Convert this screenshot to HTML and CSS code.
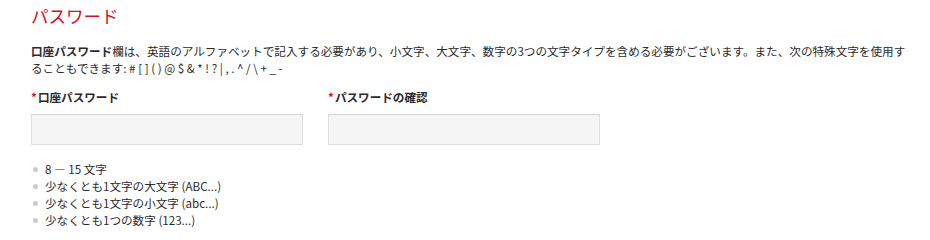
FILE: index.html
```html
<!DOCTYPE html>
<html lang="ja">
<head>
  <meta charset="UTF-8" />
  <meta name="viewport" content="width=device-width, initial-scale=1.0"/>
  <title>パスワード</title>
  <link rel="stylesheet" href="styles.css">
</head>
<body>

<div class="section">
  <h2 class="title">パスワード</h2>

  <p class="note"><strong>口座パスワード</strong>欄は、英語のアルファベットで記入する必要があり、小文字、大文字、数字の3つの文字タイプを含める必要がございます。また、次の特殊文字を使用す<br>ることもできます: # [ ] ( ) @ $ &amp; * ! ? | , . ^ / \ + _ -</p>

  <div class="fields">
    <div class="field">
      <label class="label" for="pw"><span class="req">*</span>口座パスワード</label>
      <input type="password" id="pw" class="input">
    </div>
    <div class="field">
      <label class="label" for="pw2"><span class="req">*</span>パスワードの確認</label>
      <input type="password" id="pw2" class="input">
    </div>
  </div>

  <ul class="rules">
    <li>8 — 15 文字</li>
    <li>少なくとも1文字の大文字 (ABC...)</li>
    <li>少なくとも1文字の小文字 (abc...)</li>
    <li>少なくとも1つの数字 (123...)</li>
  </ul>
</div>

</body>
</html>
```

FILE: styles.css
```css
body {
  font-family: "Noto Sans CJK JP", "Noto Sans", sans-serif;
  margin: 0;
  padding: 0;
  background: white;
  color: #2b2b2b;
}

.section {
  padding: 4px 16px 0 31px;
}

.title {
  margin: 0;
  font-size: 17.5px;
  font-weight: normal;
  line-height: 24px;
  color: #d0112b;
}

.note {
  margin: 15px 0 0;
  font-size: 11.6px;
  line-height: 17px;
}

.note strong {
  font-weight: bold;
}

.fields {
  display: flex;
  gap: 25px;
  margin-top: 12px;
}

.field {
  display: flex;
  flex-direction: column;
}

.label {
  font-size: 11.6px;
  font-weight: bold;
  line-height: 17px;
  margin-bottom: 8px;
}

.req {
  color: #d0112b;
  margin-right: 1px;
}

.input {
  width: 272px;
  height: 31px;
  box-sizing: border-box;
  border: 1px solid #ddd;
  border-top-color: #d2d2d2;
  background: #f5f5f5;
  margin: 0;
  padding: 0 8px;
}

.rules {
  list-style: none;
  margin: 16px 0 0;
  padding: 0;
  font-size: 11.6px;
  line-height: 17px;
}

.rules li {
  height: 17px;
}

.rules li::before {
  content: "";
  display: inline-block;
  vertical-align: middle;
  width: 5px;
  height: 5px;
  margin: -2px 7px 0 2px;
  border-radius: 50%;
  background: #ccc;
}
```
